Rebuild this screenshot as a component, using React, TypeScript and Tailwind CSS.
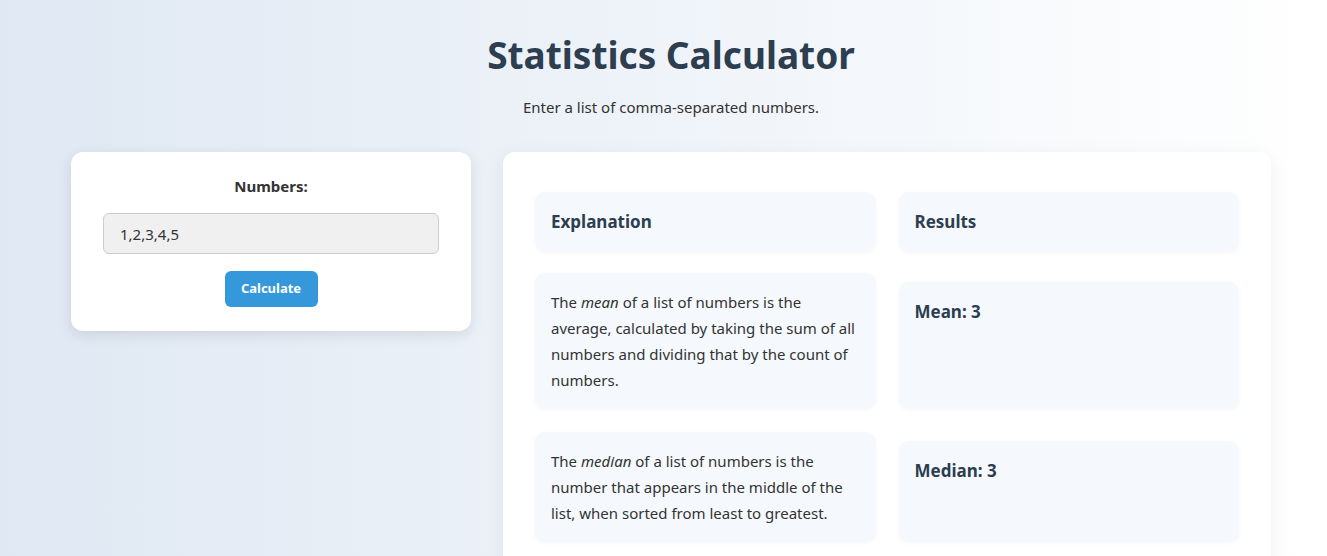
import { useState } from 'react';

// Statistics calculator: input card on the left, explanation/results grid on the right

const font = { fontFamily: '"Noto Sans", "Open Sans", sans-serif' };

const Box = ({ children, className = '' }: { children: React.ReactNode; className?: string }) => (
    <div className={`bg-[#f5f9fd] rounded-[10px] shadow-[0_1px_4px_rgba(0,0,0,0.04)] p-4 ${className}`}>{children}</div>
);

export default function App() {
    const [input, setInput] = useState('1,2,3,4,5');
    const [nums, setNums] = useState<number[]>([1, 2, 3, 4, 5]);

    const calculate = () => {
        const parsed = input
            .split(',')
            .map((s) => parseFloat(s.trim()))
            .filter((n) => !isNaN(n));
        setNums(parsed);
    };

    const mean = nums.length ? nums.reduce((a, b) => a + b, 0) / nums.length : 0;
    const sorted = [...nums].sort((a, b) => a - b);
    const mid = Math.floor(sorted.length / 2);
    const median = sorted.length === 0 ? 0 : sorted.length % 2 ? sorted[mid] : (sorted[mid - 1] + sorted[mid]) / 2;
    const counts: Record<number, number> = {};
    nums.forEach((n) => (counts[n] = (counts[n] || 0) + 1));
    const maxCount = Math.max(0, ...Object.values(counts));
    const modes = Object.keys(counts).filter((k) => counts[Number(k)] === maxCount);

    const rows = [
        {
            text: (
                <>
                    The <em>mean</em> of a list of numbers is the average, calculated by taking the sum of all numbers and dividing that by the count of numbers.
                </>
            ),
            result: `Mean: ${+mean.toFixed(2)}`,
        },
        {
            text: (
                <>
                    The <em>median</em> of a list of numbers is the number that appears in the middle of the list, when sorted from least to greatest.
                </>
            ),
            result: `Median: ${median}`,
        },
        {
            text: (
                <>
                    The <em>mode</em> of a list of numbers is the number that appears most often in the list.
                </>
            ),
            result: `Mode: ${maxCount > 1 ? modes.join(', ') : 'None'}`,
        },
    ];

    return (
        <div className="min-h-screen bg-linear-to-r from-[#dfe8f3] to-white text-[#333]" style={font}>
            <div className="w-[1215px] mx-auto pl-[15px] pt-[28px] pb-10">
                <h1 className="text-center text-[37px] leading-[54px] font-bold text-[#2c3e50]">Statistics Calculator</h1>
                <p className="text-center text-[15px] leading-[22px] mt-[14px] text-[#333]">Enter a list of comma-separated numbers.</p>

                <div className="flex items-start gap-8 mt-[34px]">
                    <div className="w-[400px] shrink-0 bg-white rounded-xl shadow-[0_4px_14px_rgba(0,0,0,0.1)] px-8 py-6 flex flex-col items-center">
                        <label className="text-[15px] leading-5 font-bold text-[#333]">Numbers:</label>
                        <input
                            value={input}
                            onChange={(e) => setInput(e.target.value)}
                            className="mt-[17px] w-full h-[41px] bg-[#f0f0f0] border border-[#ccc] rounded-md px-4 text-[15px] text-[#333] outline-none"
                            style={font}
                        />
                        <button
                            onClick={calculate}
                            className="mt-[17px] w-[93px] h-9 bg-[#3498db] rounded-md text-white text-[13px] font-bold cursor-pointer"
                            style={font}
                        >
                            Calculate
                        </button>
                    </div>

                    <div className="flex-1 bg-white rounded-xl shadow-[0_4px_20px_rgba(0,0,0,0.06)] px-8 pt-10 pb-8">
                        <div className="grid grid-cols-2 gap-x-[23px]">
                            <Box className="h-[60px]">
                                <h3 className="text-[17px] leading-7 font-bold text-[#2c3e50]">Explanation</h3>
                            </Box>
                            <Box className="h-[60px]">
                                <h3 className="text-[17px] leading-7 font-bold text-[#2c3e50]">Results</h3>
                            </Box>
                        </div>
                        {rows.map((r, i) => (
                            <div key={i} className={`grid grid-cols-2 gap-x-[23px] ${i === 0 ? 'mt-[21px]' : 'mt-[23px]'}`}>
                                <Box>
                                    <p className="text-[15px] leading-[26px] text-[#333]">{r.text}</p>
                                </Box>
                                <Box className="mt-[9px]">
                                    <h3 className="text-[17px] leading-7 font-bold text-[#2c3e50]">{r.result}</h3>
                                </Box>
                            </div>
                        ))}
                    </div>
                </div>
            </div>
        </div>
    );
}
